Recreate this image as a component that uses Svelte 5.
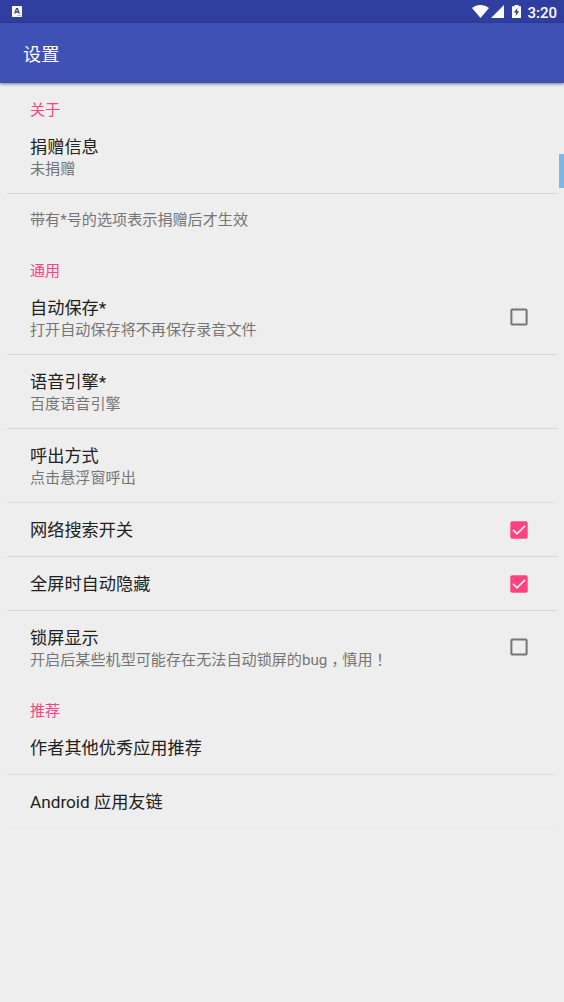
<script lang="ts">
	interface Preference {
		title?: string;
		summary?: string;
		checked?: boolean;
		divider?: 'normal' | 'light' | 'faint';
	}

	interface Category {
		name: string;
		items: Preference[];
	}

	let categories: Category[] = $state([
		{
			name: '关于',
			items: [
				{ title: '捐赠信息', summary: '未捐赠', divider: 'normal' },
				{ summary: '带有*号的选项表示捐赠后才生效' }
			]
		},
		{
			name: '通用',
			items: [
				{ title: '自动保存*', summary: '打开自动保存将不再保存录音文件', checked: false, divider: 'normal' },
				{ title: '语音引擎*', summary: '百度语音引擎', divider: 'normal' },
				{ title: '呼出方式', summary: '点击悬浮窗呼出', divider: 'light' },
				{ title: '网络搜索开关', checked: true, divider: 'normal' },
				{ title: '全屏时自动隐藏', checked: true, divider: 'normal' },
				{ title: '锁屏显示', summary: '开启后某些机型可能存在无法自动锁屏的bug，慎用！', checked: false }
			]
		},
		{
			name: '推荐',
			items: [
				{ title: '作者其他优秀应用推荐', divider: 'light' },
				{ title: 'Android 应用友链', divider: 'faint' }
			]
		}
	]);

	function toggle(item: Preference) {
		if (item.checked !== undefined) {
			item.checked = !item.checked;
		}
	}

	// full-width marks get their own span, so they sit centred in their cell
	function splitMarks(text: string) {
		return text.split(/([，！])/).filter((part) => part !== '');
	}
</script>

<div class="screen">
	<div class="status-bar">
		<svg class="notification" width="10" height="11" viewBox="0 0 10 11">
			<rect width="10" height="11" rx="0.8" fill="#fff" />
			<path d="M2.700 7.600 4.500 2.600h1L7.300 7.600M3.500 6h3" fill="none" stroke="#303f9f" stroke-width="1.300" />
			<path d="M5.500 9.500h1M7.500 9.500h1" stroke="#303f9f" stroke-width="0.700" />
		</svg>
		<div class="status-icons">
			<svg width="17" height="13" viewBox="0 0 17 13">
				<path d="M0 3C5-1 12-1 17 3L8.500 13Z" fill="#fff" />
			</svg>
			<svg class="signal" width="13" height="13" viewBox="0 0 13 13">
				<path d="M13 0v13H0Z" fill="#fff" />
			</svg>
			<svg class="battery" width="9" height="13" viewBox="0 0 9 13">
				<path d="M2.500 0h4v1.300H8.500q.5 0 .5.500V12.500q0 .5-.5.500H.5Q0 13 0 12.500V1.800q0-.5.500-.5h2Z" fill="#fff" />
				<path d="M5.600 2.800 1.800 7.500h2.300L3.400 11.200 7.200 6.200H4.900Z" fill="#303f9f" />
			</svg>
			<span class="clock">3:20</span>
		</div>
	</div>

	<header class="toolbar">设置</header>

	<main>
		{#each categories as category (category.name)}
			<h2>{category.name}</h2>
			{#each category.items as item}
				<!-- svelte-ignore a11y_click_events_have_key_events, a11y_no_static_element_interactions -->
				<div
					class="item {item.divider ?? ''}"
					class:note={!item.title}
					class:single={!item.summary}
					onclick={() => toggle(item)}
				>
					<div class="text">
						{#if item.title}<div class="title">{item.title}</div>{/if}
						{#if item.summary}
							<div class="summary">
								{#each splitMarks(item.summary) as part}<span class:comma={part === '，'} class:exclamation={part === '！'}>{part}</span>{/each}
							</div>
						{/if}
					</div>
					{#if item.checked !== undefined}
						<svg class="checkbox" width="18" height="18" viewBox="0 0 18 18">
							{#if item.checked}
								<rect x="0.3" y="0.3" width="17.400" height="17.400" rx="1.800" fill="#ff4081" />
								<path d="M3 8.800 7 12.800 15 4.800" fill="none" stroke="#eee" stroke-width="1.800" />
							{:else}
								<rect x="1.400" y="1.400" width="15.200" height="15.200" rx="0.800" fill="none" stroke="#757575" stroke-width="2" />
							{/if}
						</svg>
					{/if}
				</div>
			{/each}
		{/each}
	</main>

	<div class="edge-handle"></div>
</div>

<style>
	:global(body) {
		background: #eee;
	}

	.screen {
		position: relative;
		height: 1002px;
		overflow: hidden;
		background: #eee;
		font-family: Roboto, 'Noto Sans CJK SC', sans-serif;
	}

	.status-bar {
		display: flex;
		justify-content: space-between;
		height: 23px;
		padding: 0 7px 0 12px;
		background: #303f9f;
	}

	.notification {
		margin-top: 6px;
	}

	.status-icons {
		display: flex;
		padding-top: 5px;
	}

	.signal {
		margin-left: 2px;
	}

	.battery {
		margin-left: 8px;
	}

	.clock {
		margin-left: 6px;
		color: #fff;
		font-size: 15px;
		font-weight: 500;
		line-height: 16px;
	}

	.toolbar {
		height: 60px;
		padding-left: 23px;
		background: #3f51b5;
		box-shadow: 0 1px 3px rgba(0, 0, 0, 0.5);
		color: #fff;
		font-size: 18.2px;
		line-height: 63px;
	}

	main {
		padding: 1px 7px 0;
	}

	h2 {
		height: 36px;
		margin: 0;
		padding: 15px 23px 0;
		box-sizing: border-box;
		color: #ff4081;
		font-size: 15.1px;
		font-weight: 400;
		line-height: 22px;
	}

	.item {
		display: flex;
		align-items: flex-start;
		justify-content: space-between;
		box-sizing: border-box;
		padding: 16px 29px 14px 23px;
		border-bottom: 1px solid transparent;
	}

	.item.note {
		padding: 16px 23px 14px;
	}

	.item.normal {
		border-color: #d5d5d5;
	}

	.item.light {
		border-color: #e0e0e0;
	}

	.item.faint {
		border-color: #ebebeb;
	}

	.title {
		height: 23px;
		color: #212121;
		font-size: 17.2px;
		line-height: 23px;
		white-space: nowrap;
	}

	.summary {
		height: 20px;
		color: #757575;
		font-size: 15.12px;
		line-height: 20px;
		white-space: nowrap;
	}

	.comma {
		margin: 0 3.5px 0 4px;
		font-feature-settings: 'halt';
	}

	.exclamation {
		font-family: 'Noto Sans CJK TC', sans-serif;
		line-height: 1;
	}

	.checkbox {
		flex: none;
		margin-top: 11px;
	}

	.single .checkbox {
		margin-top: 2px;
	}

	.edge-handle {
		position: absolute;
		top: 154px;
		right: 0;
		width: 5px;
		height: 34px;
		background: #7cb7e6;
	}
</style>
